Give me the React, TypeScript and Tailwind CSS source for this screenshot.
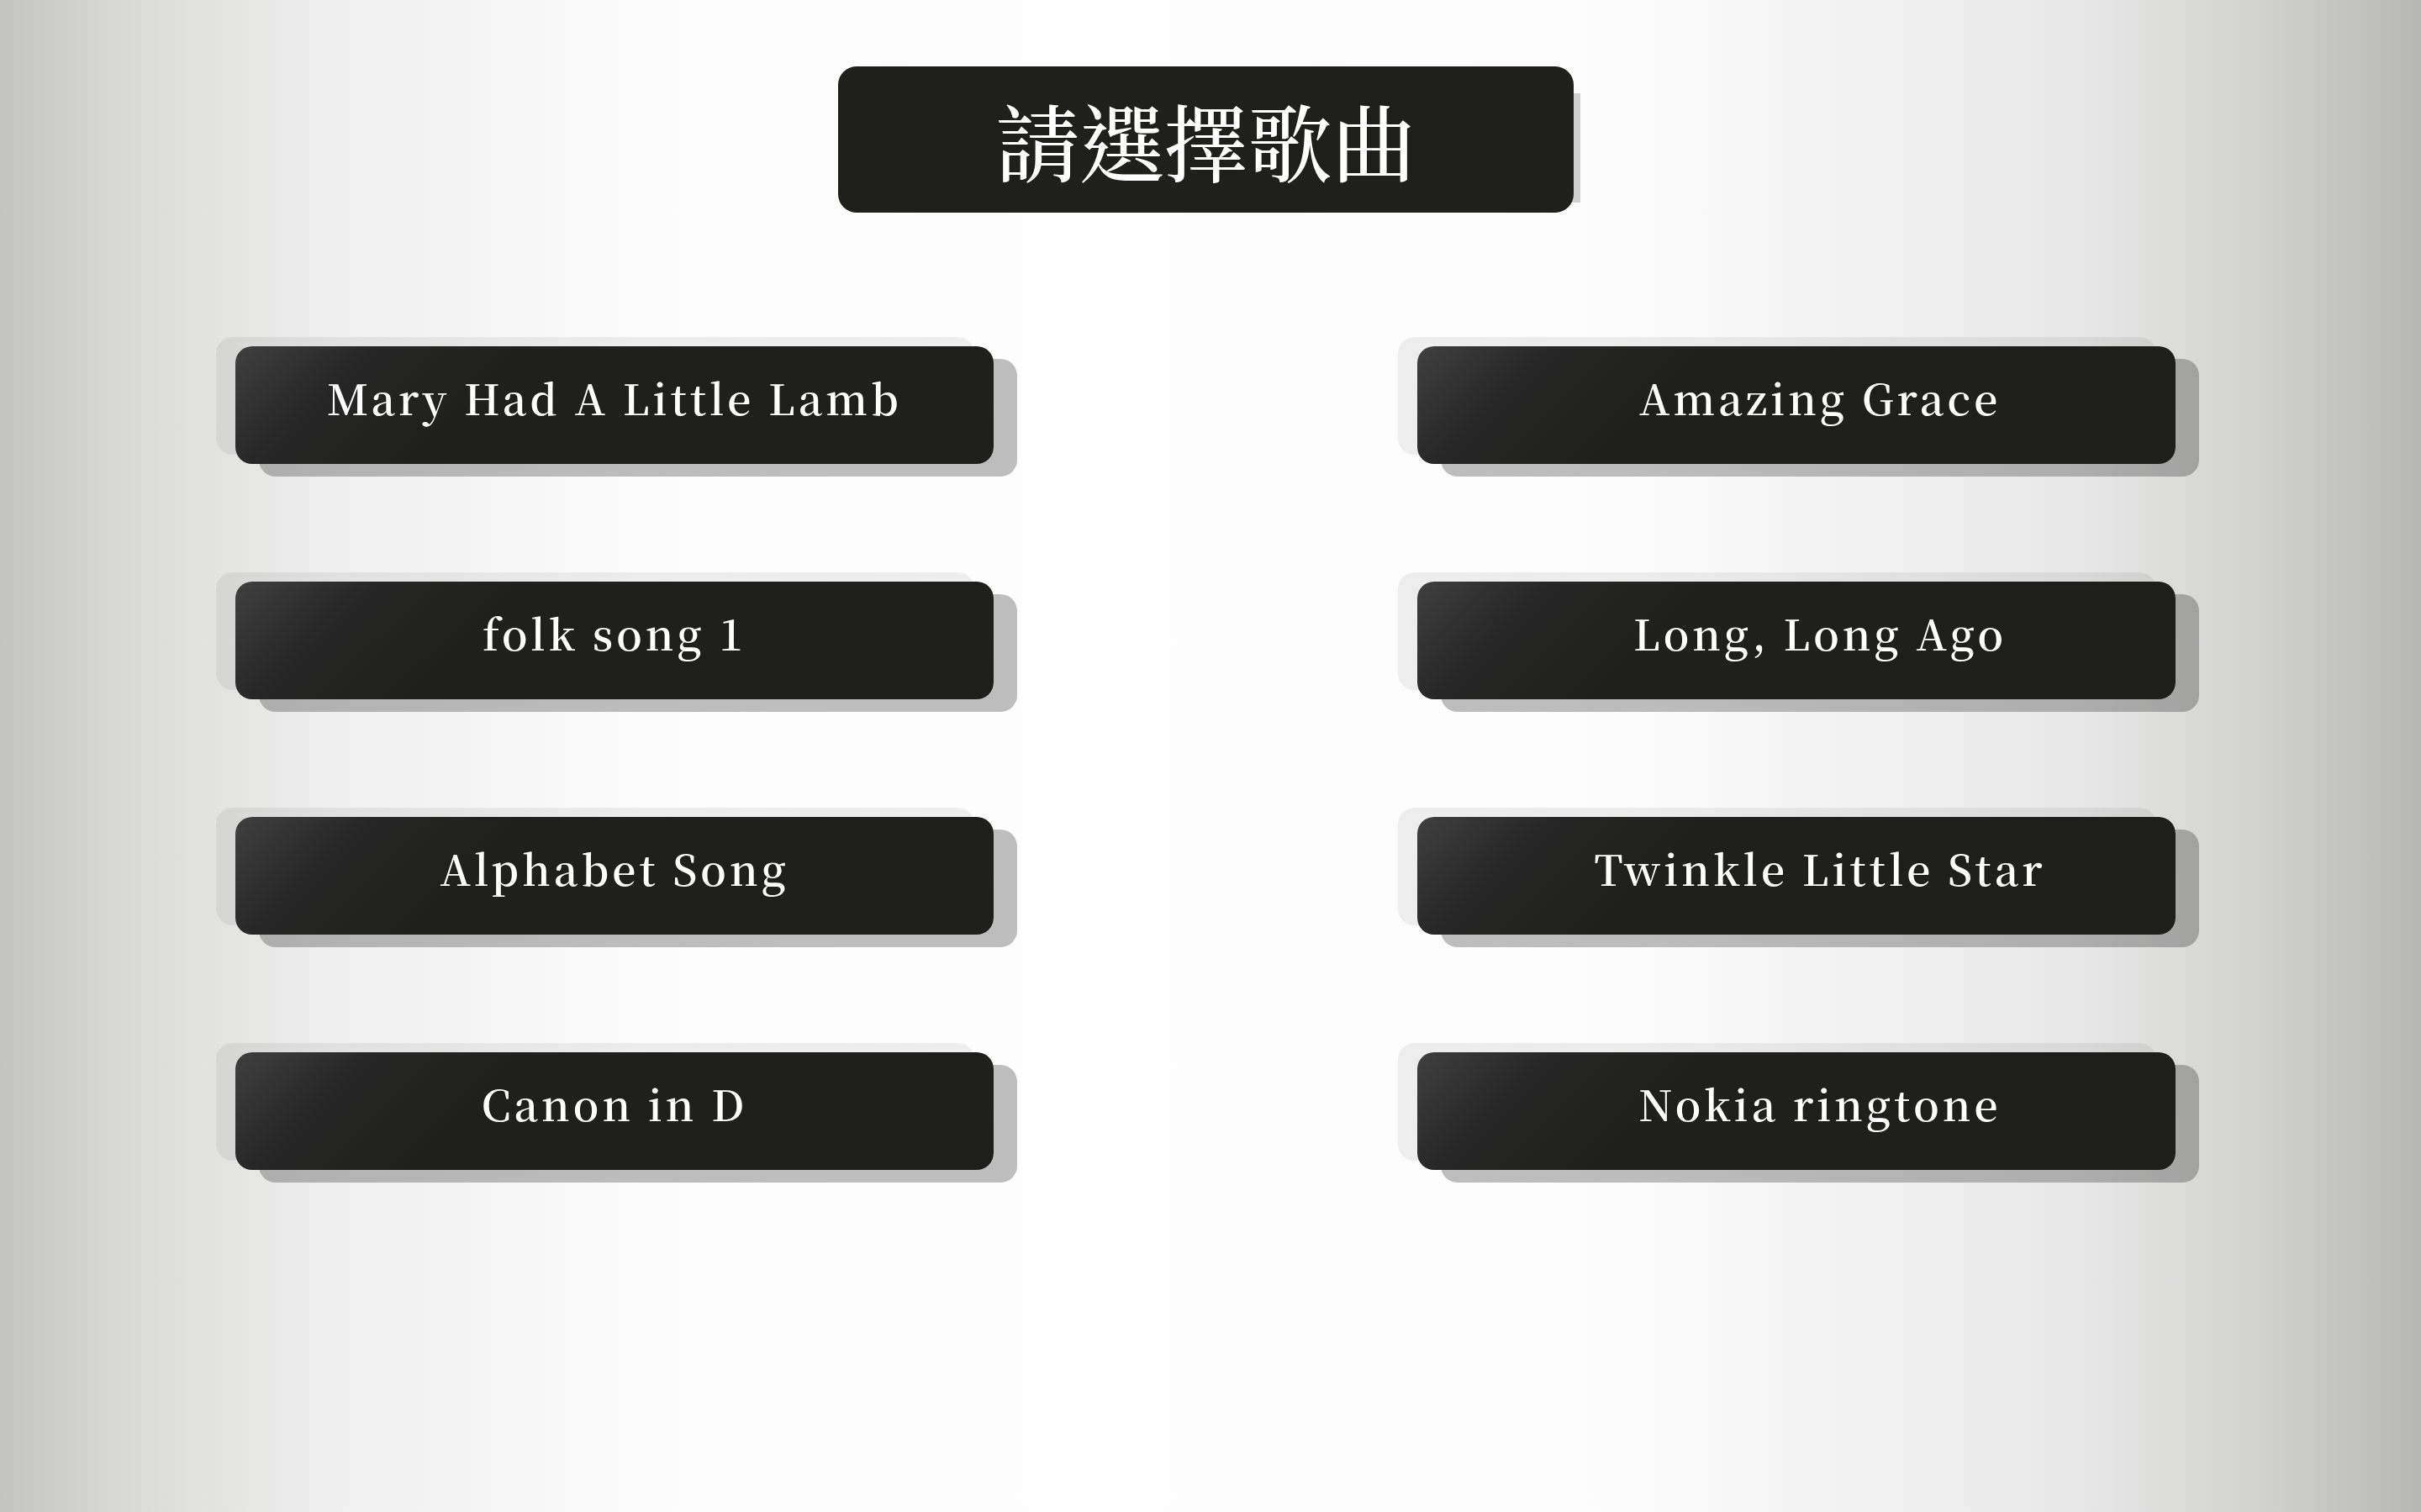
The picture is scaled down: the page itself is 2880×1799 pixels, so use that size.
import React from "react";

const songs: string[] = [
  "Mary Had A Little Lamb",
  "Amazing Grace",
  "folk song 1",
  "Long, Long Ago",
  "Alphabet Song",
  "Twinkle Little Star",
  "Canon in D",
  "Nokia ringtone",
];

function SongButton({ label, right }: { label: string; right: boolean }) {
  return (
    <button
      type="button"
      className={
        right
          ? "w-[902px] h-[140px] rounded-[20px] bg-[linear-gradient(135deg,#3f3f3f_0%,#262626_16%,#1f1f1d_34%,#1e1e1c_100%)] shadow-[28px_15px_0_0_rgba(0,0,0,0.25),-23px_-11px_0_0_rgba(0,0,0,0.06)] flex items-center justify-center text-white text-[50px] font-semibold tracking-[0.08em] leading-none font-['Noto_Serif_CJK_TC','Liberation_Serif',serif] pb-[20px] pl-[56px]"
          : "w-[902px] h-[140px] rounded-[20px] bg-[linear-gradient(135deg,#3f3f3f_0%,#262626_16%,#1f1f1d_34%,#1e1e1c_100%)] shadow-[28px_15px_0_0_rgba(0,0,0,0.25),-23px_-11px_0_0_rgba(0,0,0,0.06)] flex items-center justify-center text-white text-[50px] font-semibold tracking-[0.08em] leading-none font-['Noto_Serif_CJK_TC','Liberation_Serif',serif] pb-[20px]"
      }
    >
      {label}
    </button>
  );
}

export default function App() {
  return (
    <div className="min-h-screen w-full bg-[linear-gradient(to_right,#c4c4c3_0%,#dcdcdb_6%,#efefef_14%,#fbfbfb_26%,#fefefe_45%,#fbfbfb_68%,#e7e7e7_86%,#cfcfce_94%,#b7b7b5_100%)] flex flex-col items-center">
      <div className="mt-[79px] mr-[11px] w-[875px] h-[174px] rounded-[22px] bg-[#1f1f1d] shadow-[30px_10px_0_-22px_rgba(0,0,0,0.17)] flex items-center justify-center">
        <span className="text-white text-[100px] leading-none font-medium font-['Noto_Serif_CJK_TC','Noto_Sans_CJK_TC',serif]">
          請選擇歌曲
        </span>
      </div>
      <div className="self-start ml-[280px] mt-[159px] grid grid-cols-[902px_902px] gap-x-[504px] gap-y-[140px]">
        {songs.map((s, i) => (
          <SongButton key={s} label={s} right={i % 2 === 1} />
        ))}
      </div>
    </div>
  );
}
